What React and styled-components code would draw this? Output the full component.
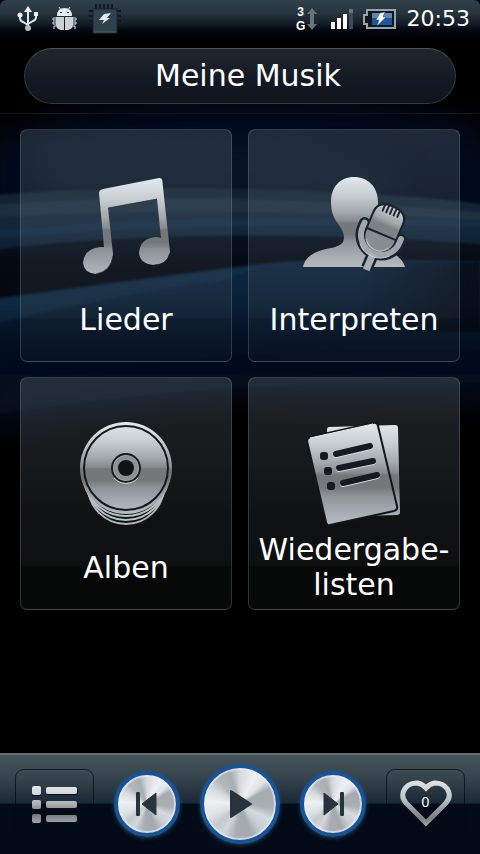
import React from "react";
import styled, { createGlobalStyle, css } from "styled-components";

const GlobalStyle = createGlobalStyle`
  * {
    box-sizing: border-box;
  }

  body {
    margin: 0;
    background-color: #000;
    color: #fff;
    font-family: "DejaVu Sans", Verdana, sans-serif;
  }
`;

const Page = styled.div`
  display: flex;
  flex-direction: column;
  position: relative;
  min-height: 100vh;
  background-color: #000;
`;

const Wallpaper = styled.svg`
  position: absolute;
  top: 0;
  left: 0;
  width: 100%;
  height: 100%;
`;

const StatusBar = styled.header`
  display: flex;
  align-items: center;
  justify-content: space-between;
  position: relative;
  height: 38px;
  padding: 0 10px 0 17px;
  border-radius: 6px 6px 0 0;
  background: linear-gradient(#2f4049 0%, #27363e 32%, #162029 60%, #04080f 78%, #000 100%);
`;

const StatusGroup = styled.div`
  display: flex;
  align-items: center;
  gap: ${props => props.$gap}px;
`;

const Network = styled.div`
  display: flex;
  align-items: center;
  width: 26px;
`;

const NetworkType = styled.div`
  font-family: "Liberation Sans", Arial, sans-serif;
  font-size: 12px;
  line-height: 14px;
  font-weight: bold;

  display: flex;
  flex-direction: column;
  align-items: center;
  width: 12px;
`;

const Clock = styled.time`
  font-size: 22px;
  line-height: 36px;
`;

const TitleArea = styled.div`
  position: relative;
  padding: 10px 24px 9px;
  border-bottom: 1px solid #10181f;
`;

const Title = styled.h1`
  font-size: 30px;
  line-height: 54px;
  font-weight: normal;
  text-align: center;

  margin: 0;
  padding-left: 16px;
  border: 1px solid #2c3840;
  border-top-color: #43515a;
  border-radius: 28px;
  background: linear-gradient(#1f262d 0%, #181f28 35%, #121823 65%, #10141a 100%);
`;

const Tiles = styled.main`
  display: grid;
  grid-template-columns: 1fr 1fr;
  gap: 15px 16px;
  position: relative;
  padding: 15px 20px;
`;

const TileButton = styled.button`
  font: inherit;
  color: inherit;

  display: flex;
  flex-direction: column;
  align-items: center;
  height: 233px;
  padding: 44px 0 0;
  border: 1px solid rgba(120, 140, 152, 0.34);
  border-radius: 7px;
  background: linear-gradient(
    rgba(132, 148, 158, 0.24) 0%,
    rgba(118, 134, 152, 0.19) 38%,
    rgba(100, 108, 116, 0.16) 60%,
    rgba(96, 102, 106, 0.15) 81%,
    rgba(80, 92, 92, 0.09) 82%,
    rgba(80, 96, 98, 0.09) 100%
  );
  cursor: pointer;
`;

const TileLabel = styled.span`
  font-size: 30px;
  line-height: 35px;
  text-align: center;
  white-space: pre-line;

  display: flex;
  align-items: center;
  height: 70px;
`;

const Player = styled.footer`
  display: flex;
  align-items: center;
  justify-content: space-between;
  position: relative;
  height: 101px;
  margin-top: auto;
  padding: 0 15px 2px;
  border-top: 2px solid #626f75;
  background: linear-gradient(#46545b 0%, #34434b 25%, #192936 48%, #030b18 50%, #030b18 100%);
`;

const PanelButton = styled.button`
  display: flex;
  align-items: center;
  justify-content: center;
  position: relative;
  width: 79px;
  height: 70px;
  padding: 0;
  border: 1px solid rgba(2, 9, 15, 0.75);
  border-radius: 9px;
  background-color: transparent;
  box-shadow: inset 0 1px 0 rgba(125, 148, 160, 0.12);
  color: #fff;
  cursor: pointer;
`;

const Count = styled.span`
  font-size: 14px;
  line-height: 16px;

  position: absolute;
  top: 50%;
  left: 50%;
  transform: translate(-50%, -65%);
`;

const big = css`
  width: 80px;
  height: 80px;
`;

const DiscButton = styled.button`
  display: flex;
  align-items: center;
  justify-content: center;
  width: 66px;
  height: 66px;
  padding: 0;
  border: 4px solid #17539a;
  border-radius: 50%;
  background: conic-gradient(
    #d6dadd 0deg,
    #eef1f3 28deg,
    #dfe3e6 48deg,
    #a6abb0 62deg,
    #a9aeb3 96deg,
    #d5dadd 118deg,
    #c9ced2 140deg,
    #a4a9ae 160deg,
    #a8adb2 188deg,
    #d3d7da 208deg,
    #c4c9cd 228deg,
    #dee2e5 248deg,
    #eef1f3 275deg,
    #d5d9dc 300deg,
    #b2b7bb 318deg,
    #a9aeb3 342deg,
    #d6dadd 360deg
  );
  box-shadow: inset 0 0 0 2px rgba(233, 238, 241, 0.65), 0 1px 4px rgba(53, 79, 99, 0.8);
  cursor: pointer;
  ${props => props.$big && big}
`;

const Metal = ({ id, y1 = 2, y2 = 104 }) => (
  <linearGradient id={id} gradientUnits="userSpaceOnUse" x1="0" y1={y1} x2="0" y2={y2}>
    <stop offset="0" stopColor="#e3e9ec" />
    <stop offset="0.2" stopColor="#c9ced2" />
    <stop offset="0.38" stopColor="#a4a9ad" />
    <stop offset="0.48" stopColor="#878b8f" />
    <stop offset="0.5" stopColor="#74787b" />
    <stop offset="0.62" stopColor="#74787b" />
    <stop offset="0.7" stopColor="#8f9499" />
    <stop offset="0.85" stopColor="#a6acb2" />
    <stop offset="1" stopColor="#b9bfc3" />
  </linearGradient>
);

const NoteIcon = () => (
  <svg width="110" height="110" viewBox="0 0 110 110" aria-hidden="true">
    <defs>
      <Metal id="note" y1={4} y2={108} />
    </defs>
    <path
      d="M32 15 88 4q3-.5 3.300 2.500L99 78q-3 13-16 13-14-1-15-12 1-15 17-16 3 0 5 1L86 25 37 34l5 46q-1 17-17 20-12-1-13-11 1-14 17-16h4L28 19q0-3 4-4Z"
      fill="url(#note)"
    />
    <path d="M42 82q-2 15-17 18M99 79q-3 12-16 12M37 34l49-9" fill="none" stroke="#10171d" strokeWidth="1" opacity="0.6" />
  </svg>
);

const ArtistIcon = () => (
  <svg width="110" height="110" viewBox="0 0 110 110" aria-hidden="true">
    <defs>
      <Metal id="artist" y1={2} y2={96} />
      <linearGradient id="mic" x1="0" y1="0" x2="0" y2="1">
        <stop offset="0" stopColor="#cbd0d4" />
        <stop offset="0.5" stopColor="#a1a6aa" />
        <stop offset="0.7" stopColor="#7d8286" />
        <stop offset="1" stopColor="#7d8286" />
      </linearGradient>
    </defs>
    <path
      d="M55 3c14 0 24 10 24 25 0 11-4 19-8 25-4 7-5 13-3 17 2 4 11 5 20 8 9 2 15 6 18 15H4c2-9 9-14 19-17 8-2 18-3 21-8 2-5 1-10-4-17-5-6-8-13-8-23C32 13 41 3 55 3Z"
      fill="url(#artist)"
    />
    <g transform="translate(82 61) rotate(23)">
      <g fill="none" stroke="#18232c" strokeLinecap="round">
        <path d="M-20-5V0a20 20 0 0 0 40 0v-4" strokeWidth="11" />
        <path d="M0 22v14" strokeWidth="12" strokeLinecap="butt" />
      </g>
      <path d="M-17 1v-20q0-13 17-13t17 13V1a17 17 0 0 1-34 0Z" fill="#18232c" />
      <path d="M-15-2v-16q0-12 15-12t15 12v16Z" fill="url(#mic)" />
      <path d="M-15 0h30v2a15 15 0 0 1-30 0Z" fill="#888d91" />
      <path d="M-12 9q4 7 12 7t12-7" fill="none" stroke="#bdc3c7" strokeWidth="1" />
      <g stroke="#1d2932" strokeWidth="2" strokeLinecap="round">
        <path d="M-8-30v7M-4-31v8M0-32v9M4-31v8M8-30v7" />
      </g>
      <path d="M-20-5V0a20 20 0 0 0 40 0v-4" fill="none" stroke="#a0a6ab" strokeWidth="6" strokeLinecap="round" />
      <path d="M0 20v18" stroke="#a9afb4" strokeWidth="7" />
      <path d="M-16 16q6 7 16 7 10 0 16-7" fill="none" stroke="#c2c8cc" strokeWidth="1" />
    </g>
  </svg>
);

const AlbumIcon = () => (
  <svg width="110" height="110" viewBox="0 0 110 110" aria-hidden="true">
    <defs>
      <Metal id="album" y1={0} y2={94} />
    </defs>
    <g fill="#0c1013" strokeWidth="2">
      <circle cx="55" cy="64" r="38" stroke="#adb7ba" />
      <circle cx="55" cy="58" r="40" stroke="#b8c1c4" />
      <circle cx="55" cy="51" r="43" stroke="#b8c1c4" />
    </g>
    <circle cx="55" cy="46" r="46" fill="url(#album)" />
    <circle cx="55" cy="46" r="42" fill="none" stroke="#13191d" strokeWidth="2" />
    <circle cx="55" cy="46" r="14" fill="#a2a7aa" stroke="#171c20" strokeWidth="2" />
    <circle cx="55" cy="46" r="10" fill="none" stroke="#8b9093" strokeWidth="4" />
    <circle cx="55" cy="46" r="8" fill="#101315" />
    <path d="M43 56a16 16 0 0 0 24 0" fill="none" stroke="#d0d5d7" strokeWidth="1" />
  </svg>
);

const PlaylistIcon = () => (
  <svg width="110" height="110" viewBox="0 0 110 110" aria-hidden="true">
    <defs>
      <Metal id="playlist" y1={0} y2={106} />
    </defs>
    <path d="M30 5 96 3q3 0 3 3l2 84q0 3-3 3l-66 2q-2 0-2-2L28 8q0-3 2-3Z" fill="url(#playlist)" />
    <path
      d="M11 15 74 1q4-1 5 3l19 80q1 4-3 5l-64 14q-3 1-4-3L8 19q0-3 3-4Z"
      fill="url(#playlist)"
      stroke="#11171b"
      strokeWidth="2"
    />
    <path d="M11 16 74 2" stroke="#eef2f4" strokeWidth="1" />
    <g stroke="#d4d9dc" strokeWidth="6" strokeLinecap="round">
      <path d="m37 33 34-8M40 47l34-7M44 62l34-8" />
    </g>
    <g stroke="#151b20" strokeWidth="6" strokeLinecap="round">
      <path d="m37 32 34-8M40 46l34-7M44 61l34-8" />
    </g>
    <g fill="#151b20">
      <rect x="21" y="30" width="8" height="8" rx="3" />
      <rect x="25" y="45" width="8" height="8" rx="3" />
      <rect x="28" y="60" width="8" height="8" rx="3" />
    </g>
  </svg>
);

const UsbIcon = () => (
  <svg width="22" height="26" viewBox="0 0 22 26" aria-hidden="true">
    <g fill="none" stroke="#dfe5e8" strokeWidth="2">
      <path d="M11 4v18M3 10v2q0 3 3 4l5 3M19 8v3q0 3-3 4l-5 3" />
    </g>
    <path d="m11 0 4 6H7Z" fill="#eef2f4" />
    <circle cx="3" cy="9" r="2.500" fill="#eef2f4" />
    <path d="M17 6h4v4h-4z" fill="#eef2f4" />
    <circle cx="11" cy="22" r="3" fill="#b4babd" />
  </svg>
);

const BugIcon = () => (
  <svg width="26" height="26" viewBox="0 0 26 26" aria-hidden="true">
    <g fill="none" stroke="#d8dee1" strokeWidth="1">
      <path d="m8 1 2 3M19 1l-2 3M5 12H2v2h3M5 16H2v2h3M5 20H3v3M22 12h3v2h-3M22 16h3v2h-3M22 20h2v3" />
    </g>
    <path d="M6 10q0-8 7.500-8T21 10Z" fill="#e6ebee" />
    <path d="M5 11h8v13h-3q-5-1-5-5ZM14 11h8v8q0 4-5 5h-3Z" fill="#cbd1d4" />
    <path d="M9 6h2v1H9zM16 6h2v1h-2z" fill="#27343c" />
  </svg>
);

const ChipIcon = () => (
  <svg width="32" height="30" viewBox="0 0 32 30" aria-hidden="true">
    <path
      d="M7 0v5M11 0v5M15 0v5M19 0v5M23 0v5M0 7h4M0 12h4M0 17h4M0 22h4M28 7h4M28 12h4M28 17h4M28 22h4"
      stroke="#11191f"
      strokeWidth="2"
    />
    <rect x="4" y="5" width="24" height="24" fill="#2f434c" stroke="#18232a" strokeWidth="1" />
    <path d="M5 28h22" stroke="#4d626b" strokeWidth="1" />
    <path d="m15 10 7-1-4 5h3l-8 6 2-4h-5Z" fill="#e2e7e9" />
  </svg>
);

const DataArrowIcon = () => (
  <svg width="10" height="24" viewBox="0 0 10 24" aria-hidden="true">
    <path d="m5 1 5 6H7v10h3l-5 6-5-6h3V7H0Z" fill="#66737a" />
  </svg>
);

const SignalIcon = () => (
  <svg width="22" height="22" viewBox="0 0 22 22" aria-hidden="true">
    <path d="M0 14h4v7H0zM6 10h4v11H6zM12 6h4v15h-4z" fill="#fff" />
    <path d="M18 1h4v20h-4z" fill="#3e4a52" />
    <path d="M18 1h4v4h-4z" fill="#69757b" />
  </svg>
);

const BatteryIcon = () => (
  <svg width="34" height="20" viewBox="0 0 34 20" aria-hidden="true">
    <path d="M4 1h28v18H4v-4H1V6h3Z" fill="#10171c" stroke="#9ba3a8" strokeWidth="2" />
    <path d="M9 4h20v12H9z" fill="#1b57a0" />
    <path d="M9 4h20v5H9z" fill="#6586ab" />
    <path d="m17 4 5-1-2 5h3l-9 9 2-6h-3Z" fill="#fff" stroke="#20466f" strokeWidth="0.5" />
  </svg>
);

const ListIcon = () => (
  <svg width="46" height="40" viewBox="0 0 46 40" aria-hidden="true">
    <defs>
      <linearGradient id="bars" gradientUnits="userSpaceOnUse" x1="0" y1="0" x2="0" y2="40">
        <stop offset="0" stopColor="#e2e7ea" />
        <stop offset="0.3" stopColor="#d0d5d8" />
        <stop offset="0.5" stopColor="#acb0b4" />
        <stop offset="0.75" stopColor="#74787b" />
        <stop offset="1" stopColor="#a6abaf" />
      </linearGradient>
    </defs>
    <g fill="#091018">
      <path d="M0 5h9v7H0zM15 5h31v6H15zM0 19h9v7H0zM15 19h31v6H15zM0 33h9v7H0zM15 33h31v6H15z" />
    </g>
    <g fill="url(#bars)">
      <rect x="0" y="2" width="9" height="9" rx="2" />
      <rect x="14" y="3" width="31" height="7" rx="2" />
      <rect x="0" y="16" width="9" height="9" rx="2" />
      <rect x="14" y="17" width="31" height="7" rx="2" />
      <rect x="0" y="30" width="9" height="9" rx="2" />
      <rect x="14" y="31" width="31" height="7" rx="2" />
    </g>
  </svg>
);

const HeartIcon = () => (
  <svg width="54" height="50" viewBox="0 0 54 50" aria-hidden="true">
    <defs>
      <linearGradient id="heart" gradientUnits="userSpaceOnUse" x1="0" y1="0" x2="0" y2="50">
        <stop offset="0" stopColor="#e2e7e9" />
        <stop offset="0.4" stopColor="#bdc2c6" />
        <stop offset="0.65" stopColor="#8d9296" />
        <stop offset="0.8" stopColor="#7b7f82" />
        <stop offset="1" stopColor="#b4babf" />
      </linearGradient>
    </defs>
    <path
      d="M27 44 7 24Q1 17 6 9.500 10 4 18 4q5 .5 9 5 4-4.500 9-5 8 0 12 5.500Q53 17 47 24Z"
      fill="none"
      stroke="url(#heart)"
      strokeWidth="5"
    />
  </svg>
);

const PrevIcon = () => (
  <svg width="24" height="26" viewBox="0 0 24 26" aria-hidden="true">
    <rect x="1" y="1" width="4" height="24" rx="1" fill="#26343d" />
    <path d="M21 2v22L7 13Z" fill="#26343d" stroke="#26343d" strokeLinejoin="round" />
  </svg>
);

const PlayIcon = () => (
  <svg width="30" height="30" viewBox="0 0 30 30" aria-hidden="true">
    <path d="M6 2v26l20-13Z" fill="#26343d" stroke="#26343d" strokeWidth="2" strokeLinejoin="round" />
  </svg>
);

const NextIcon = () => (
  <svg width="24" height="26" viewBox="0 0 24 26" aria-hidden="true">
    <path d="M3 2v22l14-11Z" fill="#26343d" stroke="#26343d" strokeLinejoin="round" />
    <rect x="19" y="1" width="4" height="24" rx="1" fill="#26343d" />
  </svg>
);

const Background = () => (
  <Wallpaper viewBox="0 0 480 854" preserveAspectRatio="none" aria-hidden="true">
    <defs>
      <linearGradient id="upper" x1="0" y1="0" x2="0" y2="1">
        <stop offset="0" stopColor="#11202d" />
        <stop offset="0.4" stopColor="#14283a" />
        <stop offset="0.7" stopColor="#0b1f35" />
        <stop offset="1" stopColor="#050d19" stopOpacity="0" />
      </linearGradient>
      <linearGradient id="lower" x1="0" y1="0" x2="0" y2="1">
        <stop offset="0" stopColor="#0f2842" />
        <stop offset="0.35" stopColor="#0a1f35" />
        <stop offset="1" stopColor="#010a1b" stopOpacity="0" />
      </linearGradient>
      <linearGradient id="fade" x1="0" y1="0" x2="1" y2="0">
        <stop offset="0.5" stopColor="#04070d" stopOpacity="0" />
        <stop offset="1" stopColor="#04070d" stopOpacity="0.75" />
      </linearGradient>
      <filter id="edge" x="-10%" y="-10%" width="120%" height="120%" colorInterpolationFilters="sRGB">
        <feGaussianBlur stdDeviation="1" />
      </filter>
      <filter id="haze" x="-20%" y="-20%" width="140%" height="140%" colorInterpolationFilters="sRGB">
        <feGaussianBlur stdDeviation="14" />
      </filter>
    </defs>
    <path d="M-20 150Q60 100 240 98t260 42v265q-220-30-520 25Z" fill="#010a1b" filter="url(#haze)" />
    <path d="M40 150q200-30 360 20v30H40Z" fill="#061423" filter="url(#haze)" />
    <g filter="url(#edge)">
      <path d="M-10 195q130-10 270-6t230 16v62q-180-12-500 13Z" fill="url(#upper)" />
      <path d="M-10 205q220-16 500 8v8q-240-16-500-4Z" fill="#2b3f4b" opacity="0.45" />
      <path d="M-10 232q230-22 500-10v5q-270-8-500 12Z" fill="#163654" opacity="0.35" />
      <path d="M-10 250q220-26 500-5v16q-220-4-500 40Z" fill="#050910" opacity="0.8" />
      <path d="M-10 299q210-28 270-35t230-2v90q-270-10-500 35Z" fill="url(#lower)" />
      <path d="M-10 301q180-25 270-34l-40 14q-110 14-230 44Z" fill="#1c4264" opacity="0.25" />
    </g>
    <path d="M240 262h240v70H240z" fill="url(#fade)" filter="url(#edge)" />
    <path d="M-10 375h500v8q-270-5-500 32Z" fill="#101a20" opacity="0.35" filter="url(#edge)" />
  </Wallpaper>
);

const tiles = [
  { label: "Lieder", Icon: NoteIcon },
  { label: "Interpreten", Icon: ArtistIcon },
  { label: "Alben", Icon: AlbumIcon },
  { label: "Wiedergabe-\nlisten", Icon: PlaylistIcon }
];

const Tile = ({ label, Icon }) => (
  <TileButton type="button">
    <Icon />
    <TileLabel>{label}</TileLabel>
  </TileButton>
);

export default () => (
  <Page>
    <GlobalStyle />
    <Background />

    <StatusBar>
      <StatusGroup $gap={12}>
        <UsbIcon />
        <BugIcon />
        <ChipIcon />
      </StatusGroup>
      <StatusGroup $gap={10}>
        <Network>
          <NetworkType>
            <span>3</span>
            <span>G</span>
          </NetworkType>
          <DataArrowIcon />
        </Network>
        <SignalIcon />
        <BatteryIcon />
        <Clock>20:53</Clock>
      </StatusGroup>
    </StatusBar>

    <TitleArea>
      <Title>Meine Musik</Title>
    </TitleArea>

    <Tiles>
      {tiles.map(tile => (
        <Tile key={tile.label} {...tile} />
      ))}
    </Tiles>

    <Player>
      <PanelButton type="button" aria-label="Titelliste">
        <ListIcon />
      </PanelButton>
      <DiscButton type="button" aria-label="Zurück">
        <PrevIcon />
      </DiscButton>
      <DiscButton type="button" aria-label="Wiedergabe" $big>
        <PlayIcon />
      </DiscButton>
      <DiscButton type="button" aria-label="Weiter">
        <NextIcon />
      </DiscButton>
      <PanelButton type="button" aria-label="Favoriten: 0">
        <HeartIcon />
        <Count>0</Count>
      </PanelButton>
    </Player>
  </Page>
);
